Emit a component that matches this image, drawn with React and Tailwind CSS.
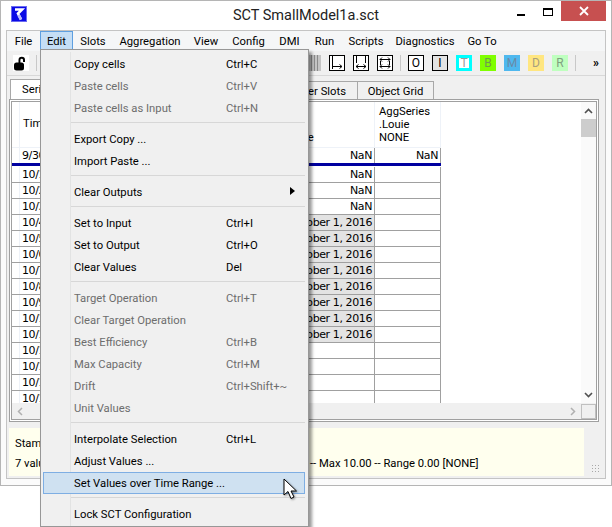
import React from "react";

const menuBar = [
  { label: "File", cls: "w-[33px]" },
  { label: "Edit", cls: "w-[33px] bg-[#c5def5] border border-[#5e9fe0]" },
  { label: "Slots", cls: "w-[40px]" },
  { label: "Aggregation", cls: "w-[74px]" },
  { label: "View", cls: "w-[38px]" },
  { label: "Config", cls: "w-[47px]" },
  { label: "DMI", cls: "w-[35px]" },
  { label: "Run", cls: "w-[35px]" },
  { label: "Scripts", cls: "w-[48px]" },
  { label: "Diagnostics", cls: "w-[70px]" },
  { label: "Go To", cls: "w-[44px]" },
];

const menuItems = [
  { label: "Copy cells", keys: "Ctrl+C" },
  { label: "Paste cells", keys: "Ctrl+V", off: true },
  { label: "Paste cells as Input", keys: "Ctrl+N", off: true },
  { sep: true },
  { label: "Export Copy ..." },
  { label: "Import Paste ..." },
  { sep: true },
  { label: "Clear Outputs", arrow: true },
  { sep: true },
  { label: "Set to Input", keys: "Ctrl+I" },
  { label: "Set to Output", keys: "Ctrl+O" },
  { label: "Clear Values", keys: "Del" },
  { sep: true },
  { label: "Target Operation", keys: "Ctrl+T", off: true },
  { label: "Clear Target Operation", off: true },
  { label: "Best Efficiency", keys: "Ctrl+B", off: true },
  { label: "Max Capacity", keys: "Ctrl+M", off: true },
  { label: "Drift", keys: "Ctrl+Shift+~", off: true },
  { label: "Unit Values", off: true },
  { sep: true },
  { label: "Interpolate Selection", keys: "Ctrl+L" },
  { label: "Adjust Values ..." },
  { label: "Set Values over Time Range ...", active: true },
  { sep: true },
  { label: "Lock SCT Configuration" },
];

const rows = [
  { t: "9/30/2016", v: "NaN", last: "NaN" },
  { t: "10/1/2016", v: "NaN" },
  { t: "10/2/2016", v: "NaN" },
  { t: "10/3/2016", v: "NaN" },
  { t: "10/4/2016", v: "October 1, 2016", sel: true },
  { t: "10/5/2016", v: "October 1, 2016", sel: true },
  { t: "10/6/2016", v: "October 1, 2016", sel: true },
  { t: "10/7/2016", v: "October 1, 2016", sel: true },
  { t: "10/8/2016", v: "October 1, 2016", sel: true },
  { t: "10/9/2016", v: "October 1, 2016", sel: true },
  { t: "10/10/2016", v: "October 1, 2016", sel: true },
  { t: "10/11/2016", v: "October 1, 2016", sel: true },
  { t: "10/12/2016" },
  { t: "10/13/2016" },
  { t: "10/14/2016" },
  { t: "10/15/2016" },
];

const flags = [
  { label: "T", cls: "bg-white border-[3px] border-[#00ffff] text-[#9a9a9a]" },
  { label: "B", cls: "bg-[#80ff00] text-[#6f9a50]" },
  { label: "M", cls: "bg-[#4fb8ee] text-[#6a8aa8]" },
  { label: "D", cls: "bg-[#ffe680] text-[#a8a080]" },
  { label: "R", cls: "bg-[#bfffbf] text-[#80a080]" },
];

function WidthIcon({ kind }) {
  return (
    <div className="w-4 h-4 bg-white border border-black">
      <svg width="14" height="14" viewBox="0 0 14 14" fill="none" stroke="#000" strokeWidth="1">
        {kind === "right" && <path d="M2.500 0v13M2.500 10.500h9M9.500 8.500l2.500 2-2.500 2" />}
        {kind === "both" && <path d="M2.500 0v7M11.500 0v7M2 10.500h10M4.500 8.500L2 10.500l2.500 2M9.500 8.500l2.500 2-2.500 2" />}
        {kind === "all" && <path d="M2.500 5v4M11.500 5v4M2 3.500h10M2 10.500h10M4 1.500L2 3.500l2 2M10 1.500l2 2-2 2M4 8.500l-2 2 2 2M10 8.500l2 2-2 2" />}
      </svg>
    </div>
  );
}

function TitleBar() {
  return (
    <div className="h-[29px] grid grid-cols-[1fr_auto_1fr] bg-white">
      <div className="pl-[10px] pt-[5px]">
        <svg width="16" height="16" viewBox="0 0 16 16">
          <rect width="16" height="16" fill="#0a0ae6" />
          <rect x="0.500" y="0.500" width="15" height="15" fill="none" stroke="#6a6af0" />
          <path d="M4 3.500h7L7 7.500l3 6" fill="none" stroke="#fff" strokeWidth="2.600" />
          <path d="M7.500 9l2.500 4.500" fill="none" stroke="#b8b8ff" strokeWidth="2.600" />
        </svg>
      </div>
      <div className="pt-[5px] text-[14.5px] leading-[20px] text-[#222]">SCT SmallModel1a.sct</div>
      <div className="flex justify-end pr-[5px]">
        <div className="flex items-start pt-[12px] gap-[18px] mr-[8px]">
          <div className="w-[8px] h-[2px] mt-[1px] bg-black" />
          <div className="w-[10px] h-[8px] -mt-[5px] border border-black border-t-2" />
        </div>
        <div className="w-[45px] h-[20px] bg-[#c75050] flex items-center justify-center">
          <svg width="10" height="10" viewBox="0 0 10 10" stroke="#fff" strokeWidth="1.800">
            <path d="M1 1l8 8M9 1l-8 8" />
          </svg>
        </div>
      </div>
    </div>
  );
}

function MenuBar() {
  return (
    <div className="h-[20px] flex bg-[#f5f6f7] text-[11.25px] text-black">
      {menuBar.map((m) => (
        <div key={m.label} className={`flex items-center justify-center h-[20px] pt-[2px] box-border ${m.cls}`}>
          {m.label}
        </div>
      ))}
    </div>
  );
}

function Toolbar() {
  return (
    <div className="h-[25px] flex items-center bg-[#f0f0f0] border-b border-[#d8d8d8]">
      <div className="ml-[6px] w-[16px] h-[16px] bg-white flex items-center justify-center">
        <svg width="15" height="15" viewBox="0 0 15 15" fill="#000">
          <rect x="0" y="6.500" width="10" height="8" rx="2.500" />
          <path d="M4.500 7V4a3.200 3.200 0 0 1 6.500 0v2H9V4a1.300 1.300 0 0 0-2.600 0v3z" />
        </svg>
      </div>
      <div className="ml-[7px] w-px h-[16px] bg-[#c8c8c8]" />
      <div className="ml-[269px] w-[15px] h-[16px] bg-[#c4c4c4] flex gap-[2px] pl-[2px]">
        <div className="w-px bg-[#8a8a8a]" />
        <div className="w-px bg-[#8a8a8a]" />
        <div className="w-px bg-[#8a8a8a]" />
        <div className="w-px bg-[#8a8a8a]" />
      </div>
      <div className="ml-[8px] flex gap-[8px]">
        <WidthIcon kind="right" />
        <WidthIcon kind="both" />
        <WidthIcon kind="all" />
      </div>
      <div className="ml-[7px] w-px h-[16px] bg-[#c8c8c8]" />
      <div className="ml-[7px] flex gap-[8px] text-[12px] leading-none">
        <div className="w-4 h-4 bg-white border border-black flex items-center justify-center">O</div>
        <div className="w-4 h-4 bg-[#e3e3e3] border border-black flex items-center justify-center">I</div>
        {flags.map((f) => (
          <div key={f.label} className={`w-4 h-4 flex items-center justify-center ${f.cls}`}>
            {f.label}
          </div>
        ))}
      </div>
      <div className="ml-[7px] w-px h-[16px] bg-[#c8c8c8]" />
      <div className="ml-[17px] text-[12px] font-bold leading-none">»</div>
    </div>
  );
}

function Tabs() {
  return (
    <div className="h-[23px] flex items-end pl-[3px] text-[11.25px]">
      <div className="w-[86px] h-[20px] bg-white border border-b-0 border-[#a8a8a8] pl-[11px] leading-[20px]">Series Slots</div>
      <div className="w-[262px] h-[18px] bg-[#f0f0f0] border border-b-0 border-[#a8a8a8] text-right pr-[11px] leading-[19px]">Other Slots</div>
      <div className="w-[76px] h-[18px] bg-[#f0f0f0] border border-l-0 border-b-0 border-[#a8a8a8] text-center leading-[19px]">Object Grid</div>
    </div>
  );
}

function Grid() {
  return (
    <div className="relative flex-1 overflow-hidden bg-white text-[11px] font-['DejaVu_Sans',sans-serif] tracking-[-0.4px]">
      <div className="flex h-[46px] border-b border-[#eef2f8] leading-[13px] w-[429px] font-['Roboto',sans-serif] text-[11.25px] tracking-normal">
        <div className="w-[8px] border-r border-[#eef2f8]" />
        <div className="w-[230px] border-r border-[#eef2f8] flex items-center pl-[3px] pb-[2px]">Time</div>
        <div className="w-[125px] border-r border-[#eef2f8] pl-[14px] pt-[3px]">
          Series<br />.Date<br />Date Type
        </div>
        <div className="w-[66px] border-r border-[#eef2f8] pl-[4px] pt-[3px]">
          AggSeries<br />.Louie<br />NONE
        </div>
      </div>
      {rows.map((r, i) => (
        <div
          key={r.t}
          className={`flex w-[429px] box-border leading-[15px] ${i === 0 ? "h-[18px] border-b-[3px] border-[#0000a0]" : i === 1 ? "h-[17px] pt-px border-b border-[#a0a0a0]" : "h-[16px] border-b border-[#a0a0a0]"}`}
        >
          <div className="w-[8px] border-r border-[#eef2f8]" />
          <div className="w-[230px] pl-[2px] border-r border-[#a0a0a0]">{r.t}</div>
          <div className={`w-[125px] pr-[2px] text-right border-r border-[#a0a0a0] ${r.sel ? "bg-[#e3e3e3]" : ""}`}>{r.v}</div>
          <div className="w-[66px] pr-[2px] text-right border-r border-[#a0a0a0]">{r.last}</div>
        </div>
      ))}
    </div>
  );
}

function Scrollbars() {
  return (
    <div className="flex flex-col w-[15px] bg-[#fafafa] h-[301px]">
      <div className="h-[17px] flex items-center justify-center">
        <svg width="9" height="6" viewBox="0 0 9 6" fill="none" stroke="#505050" strokeWidth="1.600"><path d="M1 5l3.500-3.500L8 5" /></svg>
      </div>
      <div className="h-[18px] bg-[#cdcdcd]" />
      <div className="flex-1" />
      <div className="h-[17px] flex items-center justify-center">
        <svg width="9" height="6" viewBox="0 0 9 6" fill="none" stroke="#505050" strokeWidth="1.600"><path d="M1 1l3.500 3.500L8 1" /></svg>
      </div>
    </div>
  );
}

function EditMenu() {
  return (
    <div className="absolute left-[40px] top-[49px] w-[269px] h-[478px] bg-[#f0f0f0] border border-[#979797] shadow-[3px_3px_3px_rgba(0,0,0,0.4)] pt-[3px] pl-[2px] pr-[3px] text-[11.25px]">
      <div className="absolute left-[29px] top-[2px] bottom-0 w-px bg-[#e2e3e3]" />
      {menuItems.map((m, i) =>
        m.sep ? (
          <div key={i} className="h-[9px] pt-[3px] pl-[28px]">
            <div className="h-px bg-[#d7d7d7]" />
          </div>
        ) : (
          <div
            key={m.label}
            className={`relative h-[22px] flex items-center pt-[2px] pl-[31px] whitespace-nowrap ${m.off ? "text-[#6d6d6d]" : "text-black"} ${m.active ? "bg-[#cfe1f1] border border-[#7eaee3]" : ""}`}
          >
            <span className={`w-[152px] ${m.active ? "-ml-px" : ""}`}>{m.label}</span>
            {m.keys && <span>{m.keys}</span>}
            {m.arrow && (
              <svg className="absolute left-[247px] top-[6px]" width="5" height="8" viewBox="0 0 5 8" fill="#000">
                <path d="M0 0l5 4-5 4z" />
              </svg>
            )}
          </div>
        )
      )}
    </div>
  );
}

export default function App() {
  return (
    <div className="relative w-[612px] h-[527px] overflow-hidden bg-white font-['Roboto',sans-serif] text-black">
      <div className="w-[612px] h-[486px] border border-[#b5b5b5] bg-[#fbfbfb] flex flex-col">
        <TitleBar />
        <div className="mx-[5px] h-[449px] border border-[#c4c4c4] bg-[#f0f0f0] flex flex-col">
          <MenuBar />
          <Toolbar />
          <Tabs />
          <div className="ml-[2px] w-[590px] h-[323px] border border-[#a0a0a0] p-px bg-white flex flex-col">
            <div className="border border-[#a0a0a0] flex-1 flex flex-col overflow-hidden">
              <div className="flex h-[301px]">
                <Grid />
                <Scrollbars />
              </div>
              <div className="h-[16px] bg-[#f0f0f0] flex items-center justify-between">
                <svg className="ml-[5px]" width="6" height="9" viewBox="0 0 6 9" fill="none" stroke="#b0b0b0" strokeWidth="1.500"><path d="M5 1L1.500 4.500 5 8" /></svg>
                <div className="flex items-center gap-[5px]">
                  <svg width="6" height="9" viewBox="0 0 6 9" fill="none" stroke="#b0b0b0" strokeWidth="1.500"><path d="M1 1l3.500 3.500L1 8" /></svg>
                  <div className="w-[15px] h-[15px] bg-[#f0f0f0] border border-[#c0c0c0]" />
                </div>
              </div>
            </div>
          </div>
          <div className="mt-[6px] ml-[2px] flex">
            <div className="w-[575px] h-[48px] bg-[#ffffee] pl-[6px] text-[11.25px] flex flex-col justify-between pt-[8px] pb-[3px]">
              <div>Stamp</div>
              <div className="flex">
                <span className="w-[295px] shrink-0">7 values</span>
                <span>-- Max 10.00 -- Range 0.00 [NONE]</span>
              </div>
            </div>
            <div className="relative w-[17px] h-[48px]">
              <div className="absolute right-0 bottom-[2px] w-[10px] h-[10px] bg-[radial-gradient(#a8a8a8_1px,transparent_1px)] bg-[length:3px_3px]" />
            </div>
          </div>
        </div>
      </div>
      <EditMenu />
      <svg className="absolute left-[282px] top-[477px] drop-shadow-[1px_1px_1px_rgba(0,0,0,0.4)]" width="18" height="24" viewBox="0 0 18 24">
        <path d="M2 2v16l4-3.500 3 7 3-1.500-3-6h5.500z" fill="#fff" stroke="#000" strokeWidth="1" />
      </svg>
    </div>
  );
}
